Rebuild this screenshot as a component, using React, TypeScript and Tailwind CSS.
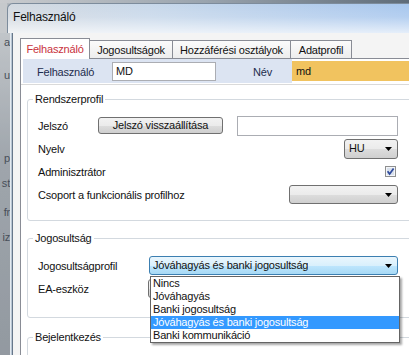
import React from 'react';

function Arrow() {
  return (
    <svg width="7" height="4" viewBox="0 0 7 4" className="shrink-0">
      <path d="M0 0h7L3.5 4z" fill="#000" />
    </svg>
  );
}

function Combo({ value, className, focused }: { value?: string; className: string; focused?: boolean }) {
  const skin = focused
    ? 'border-[#3c7fb1] bg-[linear-gradient(180deg,#eaf6fd_0%,#d9f0fc_50%,#bee6fd_51%,#a7d9f5_100%)]'
    : 'border-[#707070] bg-[linear-gradient(180deg,#f2f2f2_0%,#ebebeb_50%,#dddddd_51%,#cfcfcf_100%)]';
  return (
    <div className={`flex items-center justify-between rounded-[3px] border pl-[3px] pr-[5px] ${skin} ${className}`}>
      <span className="truncate">{value}</span>
      <Arrow />
    </div>
  );
}

function CheckBox() {
  return (
    <svg width="11" height="11" viewBox="0 0 11 11">
      <rect x="0.5" y="0.5" width="10" height="10" fill="#f4f6f9" stroke="#8e8f8f" />
      <rect x="2" y="2" width="7" height="7" fill="#d9e1ec" />
      <path d="M2.6 5.2 L4.6 8 L8.6 2.4" stroke="#2f4a9c" strokeWidth="1.7" fill="none" />
    </svg>
  );
}

function Row({ label, labelWidth, children }: { label: string; labelWidth?: string; children?: React.ReactNode }) {
  return (
    <div className="flex h-[23px] w-[360px] items-center">
      <div className={`shrink-0 pt-[2px] ${labelWidth ?? ''}`}>{label}</div>
      {children}
    </div>
  );
}

const profiles = ['Nincs', 'Jóváhagyás', 'Banki jogosultság', 'Jóváhagyás és banki jogosultság', 'Banki kommunikáció'];

export default function App() {
  return (
    <div className="flex h-[355px] w-[409px] flex-col overflow-hidden bg-[#b4b9be] font-['Liberation_Sans',Arial,sans-serif] text-[11px] leading-[13px] tracking-[-0.2px] text-[#111]">
      {/* edge of the window behind */}
      <div className="h-[3px] shrink-0 bg-[linear-gradient(90deg,#c9cbce_0%,#9aa4ae_50%,#5f6c79_100%)]" />

      {/* title bar */}
      <div className="flex h-[30px] shrink-0">
        <div className="w-[7px] shrink-0 bg-[#c6c9cc]" />
        <div className="flex-1 rounded-tl-[6px] border-l border-t border-[#7d8c9c] bg-[linear-gradient(180deg,rgba(255,255,255,0)_0%,rgba(255,255,255,0.15)_45%,rgba(255,255,255,0.7)_100%),linear-gradient(90deg,#d3d9e0_0%,#c8d8ea_35%,#a8c7ee_100%)] pl-[5px] pt-[6px] text-[12px] leading-[15px]">
          Felhasználó
        </div>
      </div>

      <div className="flex min-h-0 flex-1">
        {/* window behind, partly visible */}
        <div className="flex w-[10px] shrink-0 flex-col items-end overflow-hidden bg-[linear-gradient(180deg,#c4c8cc_0%,#9aa1a8_40%,#8b929a_100%)] text-[#2c3440] opacity-80">
          <div className="mt-[3px] h-[13px]">a</div>
          <div className="mt-[20px] h-[13px]">u</div>
          <div className="mt-[70px] h-[13px]">p</div>
          <div className="mt-[12px] h-[13px]">st</div>
          <div className="mt-[16px] h-[13px]">fr</div>
          <div className="mt-[12px] h-[13px]">iz</div>
        </div>
        <div className="w-[2px] shrink-0 border-l border-[#e4eaf0] bg-[#b7c5d3]" />

        {/* client area */}
        <div className="flex min-w-0 flex-1 flex-col overflow-hidden border-l border-[#67778a] bg-[#f4f4f4] pl-[7px] pt-[5px]">
          {/* tabs */}
          <div className="flex h-[20px] items-end">
            <div className="relative z-10 -mb-px flex h-[21px] w-[70px] shrink-0 items-center justify-center border-l border-r border-t border-[#898c95] bg-white pt-[1px] text-[#c8323c]">
              Felhasználó
            </div>
            <div className="flex h-[18px] w-[83px] shrink-0 items-center justify-center border-r border-t border-[#898c95] bg-[linear-gradient(180deg,#fbfbfb,#ededed)] pt-[1px]">
              Jogosultságok
            </div>
            <div className="flex h-[18px] w-[118px] shrink-0 items-center justify-center border-r border-t border-[#898c95] bg-[linear-gradient(180deg,#fbfbfb,#ededed)] pt-[1px]">
              Hozzáférési osztályok
            </div>
            <div className="flex h-[18px] w-[61px] shrink-0 items-center justify-center border-r border-t border-[#898c95] bg-[linear-gradient(180deg,#fbfbfb,#ededed)] pt-[1px]">
              Adatprofil
            </div>
          </div>

          {/* tab page */}
          <div className="flex-1 border-l border-t border-[#898c95] bg-white">
            <div className="flex h-[24px] items-center">
              <div className="ml-[2px] flex h-full w-[269px] shrink-0 items-center bg-[#dce4f2] pl-[14px] text-[#1d2c4d]">
                <div className="w-[75px] pt-[2px]">Felhasználó</div>
                <div className="flex h-[19px] w-[104px] items-center border border-[#abadb3] bg-white pl-[3px] text-[#111]">MD</div>
                <div className="ml-auto mr-[20px] pt-[2px]">Név</div>
              </div>
              <div className="flex h-[20px] flex-1 items-center bg-[#f1c35f] pl-[4px]">md</div>
            </div>
            <div className="mt-[1px] h-px bg-[#dadada]" />

            <div className="pl-[6px]">
              <fieldset className="mt-[8px] w-[400px] rounded-[3px] border border-[#d3d9df] pb-[14px] pl-[10px] pt-[8px]">
                <legend className="-ml-[5px] px-[2px]">Rendszerprofil</legend>
                <Row label="Jelszó" labelWidth="w-[60px]">
                  <div className="flex h-[17px] w-[125px] items-center justify-center rounded-[3px] border border-[#707070] bg-[linear-gradient(180deg,#f2f2f2_0%,#ebebeb_50%,#dddddd_51%,#cfcfcf_100%)]">
                    Jelszó visszaállítása
                  </div>
                  <div className="ml-auto h-[20px] w-[161px] border border-[#abadb3] bg-white" />
                </Row>
                <Row label="Nyelv">
                  <Combo value="HU" className="ml-auto h-[20px] w-[54px] pl-[4px]" />
                </Row>
                <Row label="Adminisztrátor">
                  <div className="ml-auto mr-[2px] flex">
                    <CheckBox />
                  </div>
                </Row>
                <Row label="Csoport a funkcionális profilhoz">
                  <Combo className="ml-auto h-[19px] w-[109px]" />
                </Row>
              </fieldset>

              <fieldset className="mt-[11px] w-[400px] rounded-[3px] border border-[#d3d9df] pb-[17px] pl-[10px] pt-[9px]">
                <legend className="-ml-[5px] px-[2px]">Jogosultság</legend>
                <Row label="Jogosultságprofil" labelWidth="w-[111px]">
                  <div className="relative">
                    <Combo focused value="Jóváhagyás és banki jogosultság" className="h-[19px] w-[249px]" />
                    {/* open drop-down list */}
                    <div className="absolute left-[1px] top-[20px] z-20 w-[250px] border border-[#646464] bg-white shadow-[2px_2px_2px_rgba(0,0,0,0.35)]">
                      {profiles.map((p, i) => (
                        <div key={p} className={`h-[13px] pl-[2px] leading-[13px] ${i === 3 ? 'bg-[#3399ff] text-white' : ''}`}>
                          {p}
                        </div>
                      ))}
                    </div>
                  </div>
                </Row>
                <Row label="EA-eszköz" labelWidth="w-[110px]">
                  <Combo className="h-[19px] w-[249px]" />
                </Row>
              </fieldset>

              <fieldset className="mt-[13px] h-[60px] w-[400px] rounded-[3px] border border-[#d3d9df] pl-[10px]">
                <legend className="-ml-[5px] px-[2px]">Bejelentkezés</legend>
              </fieldset>
            </div>
          </div>
        </div>
      </div>
    </div>
  );
}
